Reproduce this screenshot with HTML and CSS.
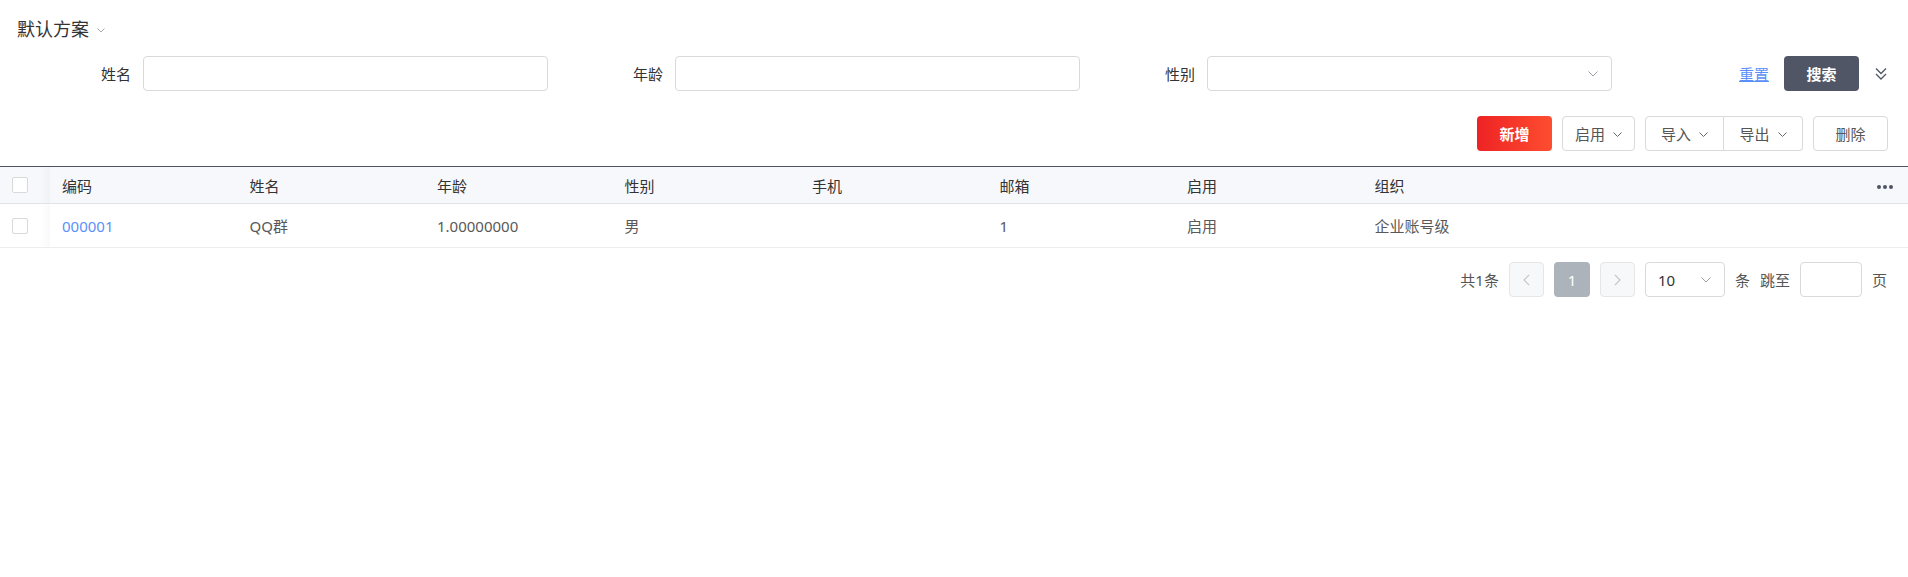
FILE: index.html
```html
<!DOCTYPE html>
<html lang="zh">
<head>
<meta charset="utf-8">
<title>默认方案</title>
<link rel="stylesheet" href="styles.css">
</head>
<body>
<div class="page">
  <div class="scheme">
    <span class="scheme-title">默认方案</span>
    <svg class="scheme-caret" width="8" height="5" viewBox="0 0 8 5"><path d="M0.5 0.5L4 4L7.5 0.5" stroke="#aaa" stroke-width="1" fill="none"/></svg>
  </div>

  <div class="filter">
    <div class="field">
      <label class="field-label">姓名</label>
      <div class="input"></div>
    </div>
    <div class="field">
      <label class="field-label">年龄</label>
      <div class="input"></div>
    </div>
    <div class="field">
      <label class="field-label">性别</label>
      <div class="input select">
        <svg width="10" height="6" viewBox="0 0 10 6"><path d="M0.5 0.5L5 5L9.5 0.5" stroke="#9a9ea8" stroke-width="1" fill="none"/></svg>
      </div>
    </div>
    <div class="actions">
      <a class="reset">重置</a>
      <button class="btn-search">搜索</button>
      <svg class="expand" width="12" height="14" viewBox="0 0 12 14"><path d="M1 1.5L6 6.5L11 1.5M1 7L6 12L11 7" stroke="#505666" stroke-width="1.3" fill="none"/></svg>
    </div>
  </div>

  <div class="toolbar">
    <button class="btn btn-add">新增</button>
    <button class="btn btn-outline btn-drop">启用<svg width="9" height="5" viewBox="0 0 9 5"><path d="M0.5 0.5L4.5 4.5L8.5 0.5" stroke="#666" stroke-width="1" fill="none"/></svg></button>
    <div class="btn-group">
      <button class="btn btn-outline btn-drop">导入<svg width="9" height="5" viewBox="0 0 9 5"><path d="M0.5 0.5L4.5 4.5L8.5 0.5" stroke="#666" stroke-width="1" fill="none"/></svg></button>
      <button class="btn btn-outline btn-drop">导出<svg width="9" height="5" viewBox="0 0 9 5"><path d="M0.5 0.5L4.5 4.5L8.5 0.5" stroke="#666" stroke-width="1" fill="none"/></svg></button>
    </div>
    <button class="btn btn-outline btn-del">删除</button>
  </div>

  <table class="grid">
    <colgroup>
      <col class="col-check">
      <col class="col-data"><col class="col-data"><col class="col-data"><col class="col-data">
      <col class="col-data"><col class="col-data"><col class="col-data"><col class="col-data">
      <col>
    </colgroup>
    <thead>
      <tr>
        <th class="cell-check"><span class="checkbox"></span></th>
        <th>编码</th><th>姓名</th><th>年龄</th><th>性别</th>
        <th>手机</th><th>邮箱</th><th>启用</th><th>组织</th>
        <th class="cell-more"><span class="dots"><i></i><i></i><i></i></span></th>
      </tr>
    </thead>
    <tbody>
      <tr>
        <td class="cell-check"><span class="checkbox"></span></td>
        <td><a class="code">000001</a></td>
        <td>QQ群</td>
        <td>1.00000000</td>
        <td>男</td>
        <td></td>
        <td>1</td>
        <td>启用</td>
        <td>企业账号级</td>
        <td></td>
      </tr>
    </tbody>
  </table>

  <div class="pager">
    <span class="pager-text">共1条</span>
    <span class="page-btn disabled"><svg width="7" height="12" viewBox="0 0 7 12"><path d="M6 1L1 6L6 11" stroke="#c3c7cf" stroke-width="1.2" fill="none"/></svg></span>
    <span class="page-btn active">1</span>
    <span class="page-btn disabled"><svg width="7" height="12" viewBox="0 0 7 12"><path d="M1 1L6 6L1 11" stroke="#c3c7cf" stroke-width="1.2" fill="none"/></svg></span>
    <span class="page-size">10<svg width="10" height="6" viewBox="0 0 10 6"><path d="M0.5 0.5L5 5L9.5 0.5" stroke="#9a9ea8" stroke-width="1" fill="none"/></svg></span>
    <span class="pager-text">条</span>
    <span class="pager-text">跳至</span>
    <span class="jump"></span>
    <span class="pager-text">页</span>
  </div>
</div>
</body>
</html>
```

FILE: styles.css
```css
* { box-sizing: border-box; }

html, body {
  margin: 0;
  background: #fff;
}

body {
  font-family: "Noto Sans", "Noto Sans CJK SC", sans-serif;
  font-size: 15px;
  color: #333;
}

.page {
  width: 100%;
}

.scheme {
  display: flex;
  align-items: center;
  height: 26px;
  margin-top: 16px;
  padding-left: 17px;
}

.scheme-title {
  font-size: 18px;
  line-height: 26px;
  color: #333;
}

.scheme-caret {
  margin-left: 8px;
  margin-top: 2px;
}

.filter {
  display: flex;
  align-items: center;
  height: 35px;
  margin-top: 14px;
  padding: 0 21px 0 16px;
}

.field {
  display: flex;
  align-items: center;
  width: 532px;
  flex: none;
}

.field-label {
  width: 115px;
  margin-right: 12px;
  text-align: right;
  font-size: 15px;
  color: #333;
}

.input {
  width: 405px;
  height: 35px;
  border: 1px solid #d9d9d9;
  border-radius: 4px;
  background: #fff;
}

.select {
  display: flex;
  align-items: center;
  justify-content: flex-end;
  padding-right: 13px;
}

.actions {
  display: flex;
  align-items: center;
  margin-left: auto;
}

.reset {
  color: #5b8ff9;
  text-decoration: underline;
  font-size: 15px;
  margin-right: 15px;
  cursor: pointer;
}

.btn-search {
  width: 75px;
  height: 35px;
  border: none;
  border-radius: 4px;
  background: #505666;
  color: #fff;
  font-family: inherit;
  font-size: 15px;
  font-weight: 700;
  padding: 0;
}

.expand {
  margin-left: 16px;
}

.toolbar {
  display: flex;
  justify-content: flex-end;
  gap: 10px;
  margin-top: 25px;
  padding-right: 20px;
}

.btn {
  height: 35px;
  border-radius: 4px;
  font-family: inherit;
  font-size: 15px;
  padding: 0;
  display: inline-flex;
  align-items: center;
  justify-content: center;
}

.btn-add {
  width: 75px;
  border: none;
  color: #fff;
  font-weight: 700;
  background: linear-gradient(90deg, #ee2324, #fe4d30);
}

.btn-outline {
  background: #fff;
  border: 1px solid #d9d9d9;
  color: #555;
}

.btn-drop {
  width: 73px;
  gap: 8px;
}

.btn-drop svg {
  margin-top: 1px;
}

.btn-del {
  width: 75px;
}

.btn-group {
  display: flex;
}

.btn-group .btn {
  width: 79px;
}

.btn-group .btn:first-child {
  border-radius: 4px 0 0 4px;
}

.btn-group .btn:last-child {
  border-radius: 0 4px 4px 0;
  border-left: none;
}

.grid {
  width: 100%;
  margin-top: 15px;
  border-collapse: collapse;
  table-layout: fixed;
  border-top: 1px solid #4e5465;
}

.col-check { width: 50px; }
.col-data { width: 187.5px; }

.grid th,
.grid td {
  text-align: left;
  padding: 0 12px;
  white-space: nowrap;
  overflow: hidden;
}

.grid th {
  height: 37px;
  background: #f7f8fb;
  font-weight: 400;
  color: #333;
  border-bottom: 1px solid #dfe3ea;
}

.grid td {
  height: 44px;
  color: #595959;
  border-bottom: 1px solid #ebedf0;
}

.grid .cell-check {
  padding: 0 0 0 12px;
  background-image: linear-gradient(90deg, rgba(0,0,0,0) 40px, rgba(0,0,0,0.025) 50px);
}

.grid td.cell-check {
  background-color: #fff;
}

.checkbox {
  display: block;
  width: 16px;
  height: 16px;
  border: 1px solid #d9d9d9;
  border-radius: 2px;
  background: #fff;
}

.cell-more {
  text-align: right !important;
  padding-right: 15px !important;
}

.dots {
  display: inline-flex;
  gap: 2px;
  vertical-align: middle;
}

.dots i {
  display: block;
  width: 4px;
  height: 4px;
  border-radius: 50%;
  background: #4e5465;
}

.code {
  color: #5b8ff9;
  cursor: pointer;
}

.pager {
  display: flex;
  align-items: center;
  justify-content: flex-end;
  gap: 10px;
  margin-top: 14px;
  padding-right: 21px;
}

.pager-text {
  color: #555;
  font-size: 15px;
}

.page-btn {
  width: 35px;
  height: 35px;
  border-radius: 4px;
  display: inline-flex;
  align-items: center;
  justify-content: center;
  font-size: 15px;
}

.page-btn.disabled {
  background: #f7f8fa;
  border: 1px solid #e6e6e6;
}

.page-btn.active {
  width: 36px;
  background: #adb3bb;
  color: #fff;
}

.page-size {
  width: 80px;
  height: 35px;
  border: 1px solid #d9d9d9;
  border-radius: 4px;
  display: inline-flex;
  align-items: center;
  justify-content: space-between;
  padding: 0 13px 0 12px;
  color: #333;
}

.jump {
  width: 62px;
  height: 35px;
  border: 1px solid #d9d9d9;
  border-radius: 4px;
}
```
